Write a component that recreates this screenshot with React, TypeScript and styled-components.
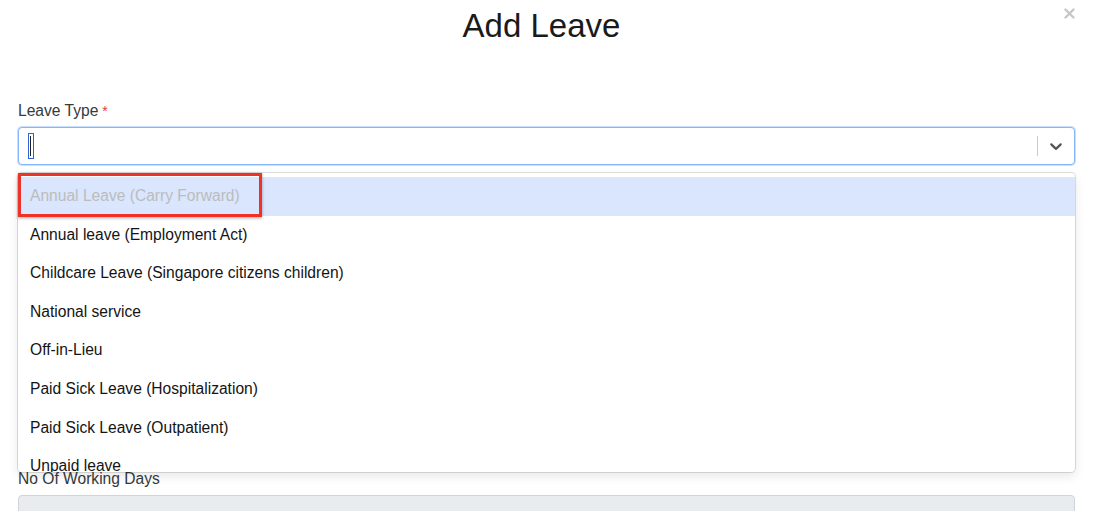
import React from 'react';
import styled, { createGlobalStyle } from 'styled-components';

const GlobalStyle = createGlobalStyle`
  html, body {
    margin: 0;
    padding: 0;
    background: #fff;
  }
  body {
    font-family: "Liberation Sans", Arial, Helvetica, sans-serif;
    color: #212529;
  }
`;

const Modal = styled.div`
  position: relative;
  width: 1103px;
  height: 511px;
  overflow: hidden;
  box-sizing: border-box;
  padding: 0 28px 0 18px;
`;

const Header = styled.div`
  padding-top: 6px;
  margin-bottom: 55px;
  padding-right: 10px;
  text-align: center;
`;

const Title = styled.h2`
  margin: 0;
  font-size: 33px;
  line-height: 40px;
  font-weight: 400;
  color: #1a1a1a;
`;

const CloseButton = styled.button`
  position: absolute;
  top: 7px;
  right: 28px;
  width: 12px;
  height: 12px;
  padding: 0;
  border: 0;
  background: transparent;
  display: flex;
  align-items: center;
  justify-content: center;
`;

// the open menu covers the fields between these two groups
const FormGroup = styled.div<{ $under?: boolean }>`
  margin-bottom: ${(p) => (p.$under ? '304px' : '16px')};
`;

const Label = styled.label`
  display: block;
  font-size: 15.6px;
  line-height: 20px;
  color: #343a40;
  margin-bottom: 6px;
`;

const Required = styled.span`
  color: #e53935;
  margin-left: 4px;
  font-size: 14px;
`;

const SelectWrap = styled.div`
  position: relative;
`;

const Control = styled.div`
  display: flex;
  align-items: center;
  height: 38px;
  box-sizing: border-box;
  border: 1px solid #86b7fa;
  box-shadow: 0 0 0 1px rgba(134, 183, 250, 0.45);
  border-radius: 4px;
  background: #fff;
`;

const ValueContainer = styled.div`
  flex: 1;
  display: flex;
  align-items: center;
  padding: 0 9px;
`;

const Caret = styled.span`
  position: relative;
  display: inline-block;
  width: 4px;
  height: 24px;
  border: 1px solid #2f62d6;
  &::before {
    content: '';
    position: absolute;
    left: 1px;
    top: 2px;
    bottom: 2px;
    width: 1px;
    background: #222;
  }
`;

const Separator = styled.span`
  width: 1px;
  height: 20px;
  background: #cccccc;
`;

const Indicator = styled.div`
  width: 36px;
  display: flex;
  align-items: center;
  justify-content: center;
  color: #555;
`;

const Menu = styled.div`
  position: absolute;
  top: calc(100% + 8px);
  left: 0;
  right: 0;
  z-index: 5;
  background: #fff;
  border-radius: 4px;
  box-shadow: 0 0 0 1px rgba(0, 0, 0, 0.12), 0 4px 11px rgba(0, 0, 0, 0.1);
`;

const MenuList = styled.div`
  max-height: 299px;
  overflow: hidden;
  padding: 4px 0;
  box-sizing: border-box;
`;

const Option = styled.div<{ $focused?: boolean; $disabled?: boolean }>`
  padding: 8px 12px;
  font-size: 15.6px;
  line-height: 22.6px;
  color: ${(p) => (p.$disabled ? '#bcbcbc' : '#141414')};
  background: ${(p) => (p.$focused ? '#d9e6fd' : 'transparent')};
`;

const Highlight = styled.div`
  position: absolute;
  top: 0;
  left: 0;
  width: 244px;
  height: 44px;
  box-sizing: border-box;
  border: 3px solid #ef3226;
  box-shadow: 0 1px 3px rgba(0, 0, 0, 0.35);
  pointer-events: none;
`;

const Input = styled.div<{ $disabled?: boolean }>`
  height: 38px;
  box-sizing: border-box;
  border: 1px solid #ced4da;
  border-radius: 4px;
  background: ${(p) => (p.$disabled ? '#e9ecef' : '#fff')};
`;

const options = [
  'Annual Leave (Carry Forward)',
  'Annual leave (Employment Act)',
  'Childcare Leave (Singapore citizens children)',
  'National service',
  'Off-in-Lieu',
  'Paid Sick Leave (Hospitalization)',
  'Paid Sick Leave (Outpatient)',
  'Unpaid leave',
];

const Chevron = () => (
  <svg width="20" height="20" viewBox="0 0 20 20" fill="currentColor">
    <path d="M4.516 7.548c0.436-0.446 1.043-0.481 1.576 0l3.908 3.747 3.908-3.747c0.533-0.481 1.141-0.446 1.574 0 0.436 0.445 0.408 1.197 0 1.615-0.406 0.418-4.695 4.502-4.695 4.502-0.217 0.223-0.502 0.335-0.787 0.335s-0.57-0.112-0.789-0.335c0 0-4.287-4.084-4.695-4.502s-0.436-1.17 0-1.615z" />
  </svg>
);

const App: React.FC = () => {
  return (
    <>
      <GlobalStyle />
      <Modal>
        <Header>
          <Title>Add Leave</Title>
        </Header>
        <CloseButton aria-label="Close">
          <svg width="11" height="11" viewBox="0 0 11 11">
            <path d="M1.5 1.5l8 8M9.5 1.5l-8 8" stroke="#c6c6c6" strokeWidth="2.4" strokeLinecap="round" />
          </svg>
        </CloseButton>

        <FormGroup $under>
          <Label>
            Leave Type<Required>*</Required>
          </Label>
          <SelectWrap>
            <Control>
              <ValueContainer>
                <Caret />
              </ValueContainer>
              <Separator />
              <Indicator>
                <Chevron />
              </Indicator>
            </Control>
            <Menu>
              <MenuList>
                {options.map((o, i) => (
                  <Option key={o} $focused={i === 0} $disabled={i === 0}>
                    {o}
                  </Option>
                ))}
              </MenuList>
              <Highlight />
            </Menu>
          </SelectWrap>
        </FormGroup>

        <FormGroup>
          <Label>No Of Working Days</Label>
          <Input $disabled />
        </FormGroup>
      </Modal>
    </>
  );
};

export default App;
